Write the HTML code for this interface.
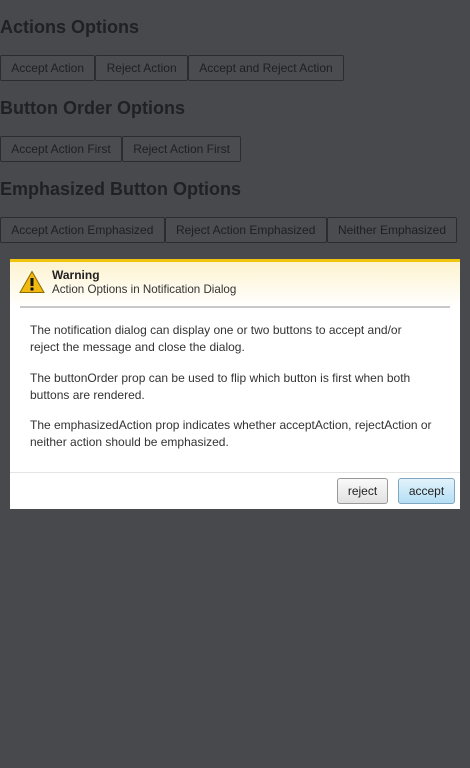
<!DOCTYPE html>
<html><head><style>
body{margin:0;width:470px;height:768px;background:#48494c;font-family:"Liberation Sans",sans-serif;color:#1f2022;position:relative;overflow:hidden}
h2{font-size:18px;font-weight:bold;margin:0;position:absolute;left:0;color:#202124}
.row{position:absolute;left:0;display:flex}
.b{border:1px solid #2b2c2e;border-radius:2px;background:#4b4c4f;font-size:12px;color:#1e1f21;padding:0 10.3px;line-height:24px;box-sizing:border-box;height:26px;margin-right:0}
.dlg{position:absolute;left:10px;top:259px;width:450px;height:250px;background:#fff;border-top:3px solid #f1c40f;box-sizing:border-box}
.hd{height:45px;background:linear-gradient(#fdf3d0,#fff);position:relative}
.sep{position:absolute;left:10px;right:10px;top:44px;height:2px;background:#c8c8c8}
.t1{position:absolute;left:42px;top:6px;font-size:12px;font-weight:bold;color:#222}
.t2{position:absolute;left:42px;top:21px;font-size:11.6px;color:#333}
p{margin:0;position:absolute;left:20px;width:412px;font-size:12px;line-height:17px;color:#333}
.ft{position:absolute;left:0;right:0;top:210px;border-top:1px solid #e4e4e4}
.db{position:absolute;top:216px;height:26px;border:1px solid #999;border-radius:3px;font-size:12px;color:#222;line-height:24px;text-align:center;box-sizing:border-box}
</style></head><body>
<h2 style="top:17px">Actions Options</h2>
<div class="row" style="top:55px"><div class="b">Accept Action</div><div class="b">Reject Action</div><div class="b">Accept and Reject Action</div></div>
<h2 style="top:98px">Button Order Options</h2>
<div class="row" style="top:136px"><div class="b">Accept Action First</div><div class="b">Reject Action First</div></div>
<h2 style="top:179px">Emphasized Button Options</h2>
<div class="row" style="top:217px"><div class="b">Accept Action Emphasized</div><div class="b">Reject Action Emphasized</div><div class="b">Neither Emphasized</div></div>
<div class="dlg">
<div class="hd">
<svg style="position:absolute;left:9px;top:8px" width="26" height="24" viewBox="0 0 26 24"><path d="M13 1.5L1 22.5H25Z" fill="#f2b90f" stroke="#8a6a00" stroke-width="1"/><rect x="11.5" y="8" width="3" height="8" fill="#111"/><rect x="11.5" y="17.5" width="3" height="3" fill="#111"/></svg>
<div class="t1">Warning</div><div class="t2">Action Options in Notification Dialog</div>
<div class="sep"></div></div>
<p style="top:60px">The notification dialog can display one or two buttons to accept and/or<br>reject the message and close the dialog.</p>
<p style="top:108px">The buttonOrder prop can be used to flip which button is first when both buttons are rendered.</p>
<p style="top:155px">The emphasizedAction prop indicates whether acceptAction, rejectAction or neither action should be emphasized.</p>
<div class="ft"></div>
<div class="db" style="left:327px;width:51px;background:linear-gradient(#fafafa,#e2e2e2)">reject</div>
<div class="db" style="left:388px;width:57px;background:linear-gradient(#e2f3fc,#b5def5);border-color:#7fa8c0">accept</div>
</div>
</body></html>
